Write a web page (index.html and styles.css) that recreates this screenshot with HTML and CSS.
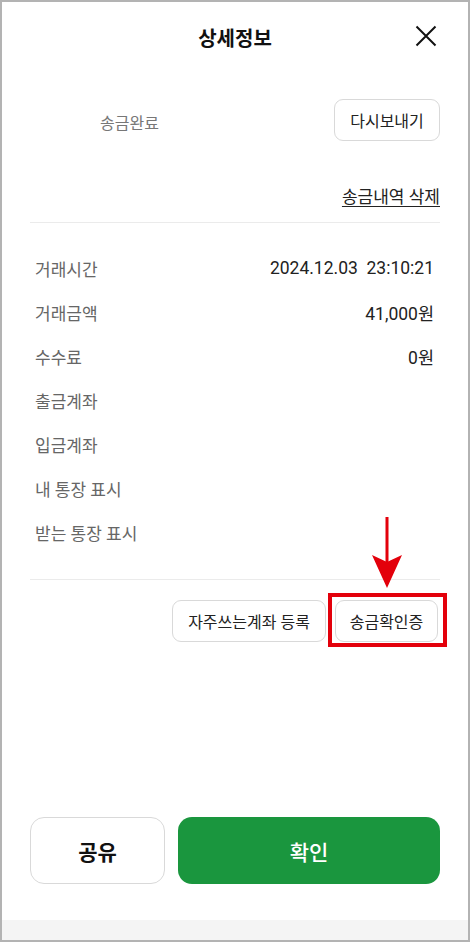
FILE: index.html
```html
<!DOCTYPE html>
<html>
<head lang="ko">
    <meta charset="UTF-8">
    <title>상세정보</title>
    <link rel="stylesheet" href="styles.css">
</head>
<body>
<div class="screen">
    <div class="header">
        <span></span>
        <h1 class="title">상세정보</h1>
        <button class="close" type="button" aria-label="닫기">
            <svg width="22" height="22" viewBox="0 0 22 22">
                <path d="M1.5 1.5 L20.5 20.5 M20.5 1.5 L1.5 20.5" stroke="#111" stroke-width="2" fill="none"/>
            </svg>
        </button>
    </div>

    <div class="content">
        <div class="status">
            <span class="statusText">송금완료</span>
            <button class="btn" type="button">다시보내기</button>
        </div>
        <div class="delete"><a href="#">송금내역 삭제</a></div>

        <ul class="info">
            <li><span>거래시간</span><em>2024.12.03&nbsp;&nbsp;23:10:21</em></li>
            <li><span>거래금액</span><em>41,000원</em></li>
            <li><span>수수료</span><em>0원</em></li>
            <li><span>출금계좌</span></li>
            <li><span>입금계좌</span></li>
            <li><span>내 통장 표시</span></li>
            <li><span>받는 통장 표시</span></li>
        </ul>

        <div class="tools">
            <button class="btn" type="button">자주쓰는계좌 등록</button>
            <span class="mark">
                <button class="btn" type="button">송금확인증</button>
                <svg class="arrow" width="30" height="72" viewBox="0 0 30 72">
                    <rect x="13.5" y="0" width="3" height="46" fill="#e3000b"/>
                    <polygon points="0,38 15,45 30,38 15,71" fill="#e3000b"/>
                </svg>
            </span>
        </div>
    </div>

    <div class="actions">
        <button class="share" type="button">공유</button>
        <button class="ok" type="button">확인</button>
    </div>
    <div class="footer"></div>
</div>
</body>
</html>
```

FILE: styles.css
```css
*{padding: 0;margin: 0;box-sizing: border-box;}
body{
    font-family: Roboto, "Noto Sans CJK KR", sans-serif;
    color: #222;
    background: #fff;
}
button{font-family: inherit;background: none;border: 0;cursor: pointer;}
.screen{
    width: 470px;
    height: 942px;
    border: 2px solid #b3b3b3;
    display: flex;
    flex-direction: column;
}
.header{
    height: 70px;
    display: grid;
    grid-template-columns: 1fr auto 1fr;
    align-items: center;
}
.title{
    font-size: 20px;
    font-weight: 700;
    color: #111;
    padding-top: 1px;
}
.close{
    justify-self: end;
    width: 22px;
    height: 22px;
    margin-right: 31px;
    margin-bottom: 3px;
}
.close svg{display: block;}

.content{
    padding: 0 28px;
    flex: 1;
}
.status{
    display: flex;
    align-items: center;
    justify-content: space-between;
    padding: 27px 0 0 70px;
}
.statusText{
    font-size: 16px;
    color: #777;
    margin-top: 4px;
}
.btn{
    height: 42px;
    padding: 0 14px;
    border: 1px solid #d9d9d9;
    border-radius: 9px;
    background: #fff;
    font-size: 16px;
    color: #222;
}
.status .btn{width: 106px;padding: 0;}
.delete{
    text-align: right;
    margin-top: 45px;
    padding-bottom: 13px;
    border-bottom: 1px solid #ebebeb;
    line-height: 22px;
}
.delete a{
    font-size: 17px;
    color: #222;
    text-decoration: underline;
    text-underline-offset: 3px;
}
.info{
    list-style-type: none;
    padding: 23px 6px 25px 5px;
    border-bottom: 1px solid #ebebeb;
}
.info li{
    height: 44px;
    display: flex;
    align-items: center;
    justify-content: space-between;
}
.info span{
    font-size: 17px;
    color: #666;
}
.info em{
    font-style: normal;
    font-size: 17.5px;
    color: #222;
}
.tools{
    display: flex;
    justify-content: flex-end;
    gap: 9px;
    padding: 20px 2px 0 0;
}
.tools .btn{width: 154px;padding: 0;}
.mark{
    position: relative;
    display: block;
}
.mark .btn{
    display: block;
    width: 103px;
}
/* red frame round the certificate button */
.mark:after{
    content: '';
    position: absolute;
    top: -7px;
    right: -9px;
    bottom: -5px;
    left: -7px;
    border: 4px solid #e3000b;
}
.arrow{
    position: absolute;
    left: 50%;
    bottom: calc(100% + 11px);
    margin-left: -15px;
}

.actions{
    display: flex;
    gap: 13px;
    padding: 0 28px 36px;
}
.actions button{
    height: 67px;
    border-radius: 14px;
    font-size: 21px;
}
.share{
    width: 135px;
    border: 1px solid #d9d9d9 !important;
    font-weight: 700;
    color: #111;
}
.ok{
    flex: 1;
    background: #1a963e !important;
    color: #fff;
    font-weight: 500;
}
.footer{
    height: 20px;
    background: #f4f4f4;
}
```
